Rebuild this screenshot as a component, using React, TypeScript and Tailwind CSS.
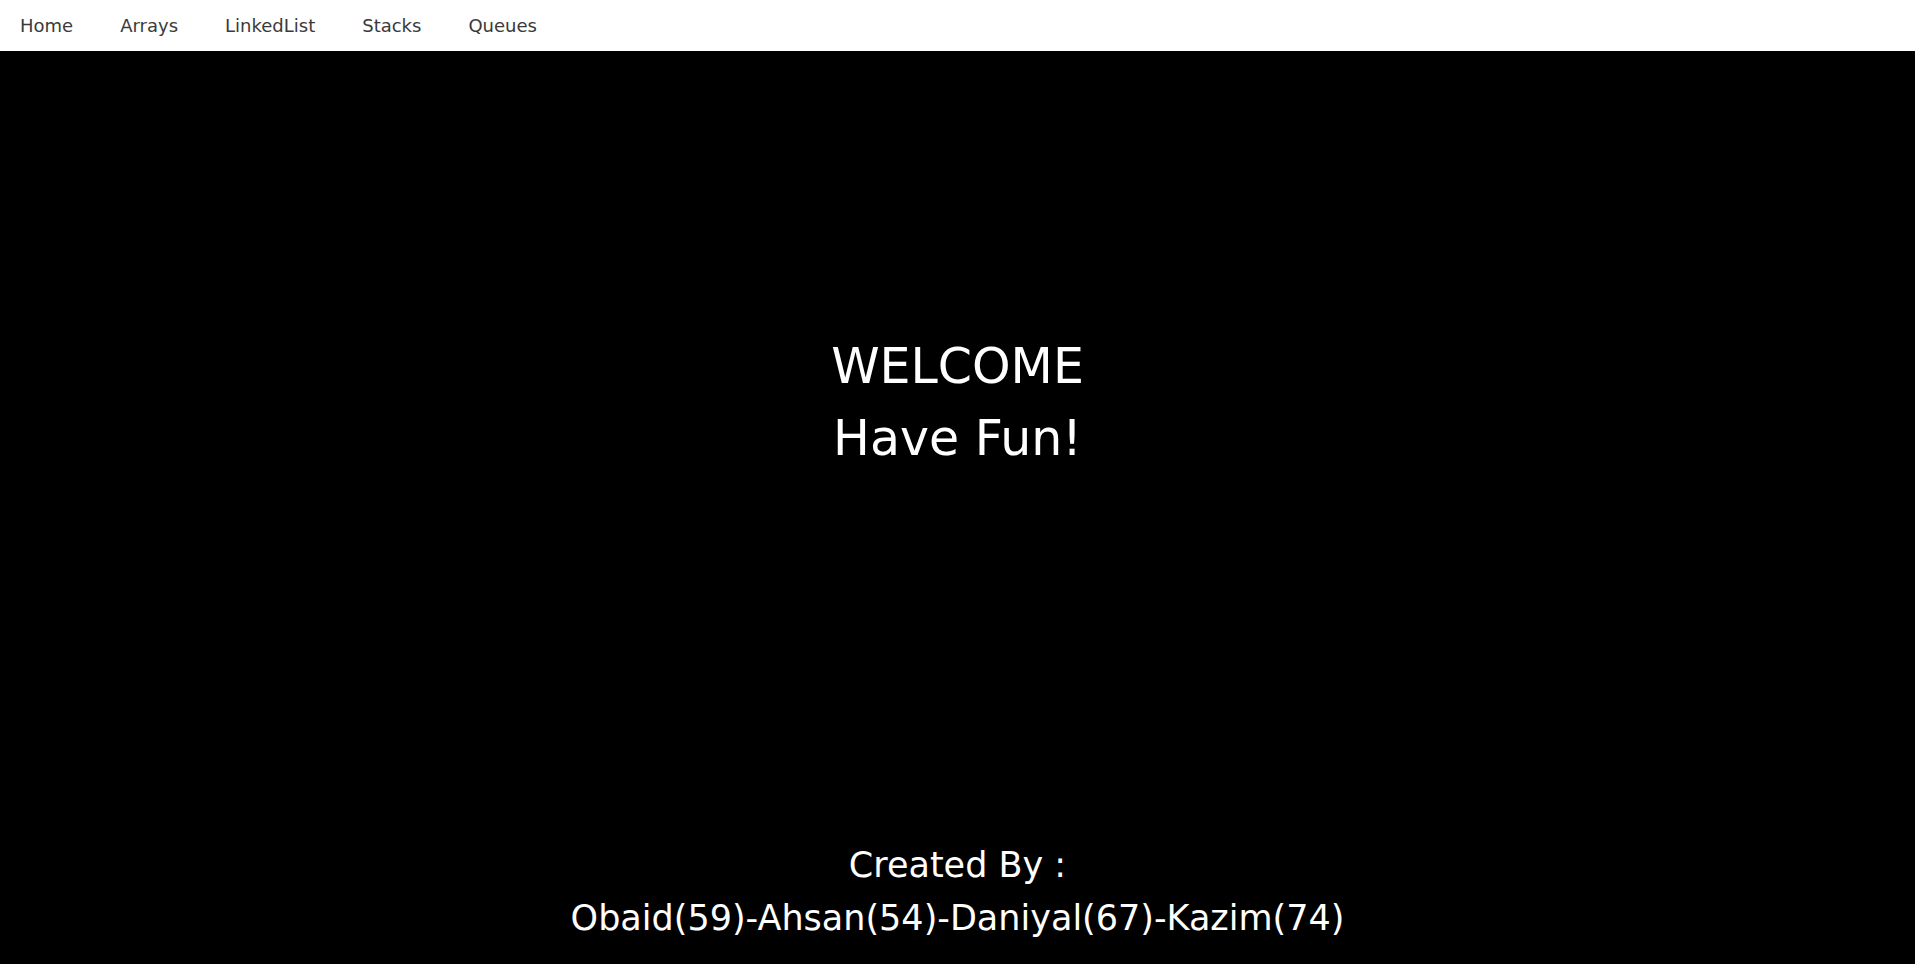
const links = ['Home', 'Arrays', 'LinkedList', 'Stacks', 'Queues'];

export default function App() {
  return (
    <div
      className="flex h-[964px] flex-col bg-black"
      style={{ fontFamily: '"DejaVu Sans", "Open Sans", sans-serif' }}
    >
      {/* top nav */}
      <nav className="flex h-[51px] shrink-0 items-center gap-[47px] bg-white pl-[20px]">
        {links.map((l) => (
          <a key={l} href="#" className="text-[18px] leading-none text-[#3a3a3a]">
            {l}
          </a>
        ))}
      </nav>

      <main className="flex flex-1 flex-col items-center text-white">
        <div className="pt-[280px] text-center text-[49px] leading-[72px]">
          <div>WELCOME</div>
          <div>Have Fun!</div>
        </div>

        <footer className="mt-auto pb-[19px] text-center text-[35px] leading-[53px]">
          <div>Created By :</div>
          <div>Obaid(59)-Ahsan(54)-Daniyal(67)-Kazim(74)</div>
        </footer>
      </main>
    </div>
  );
}
